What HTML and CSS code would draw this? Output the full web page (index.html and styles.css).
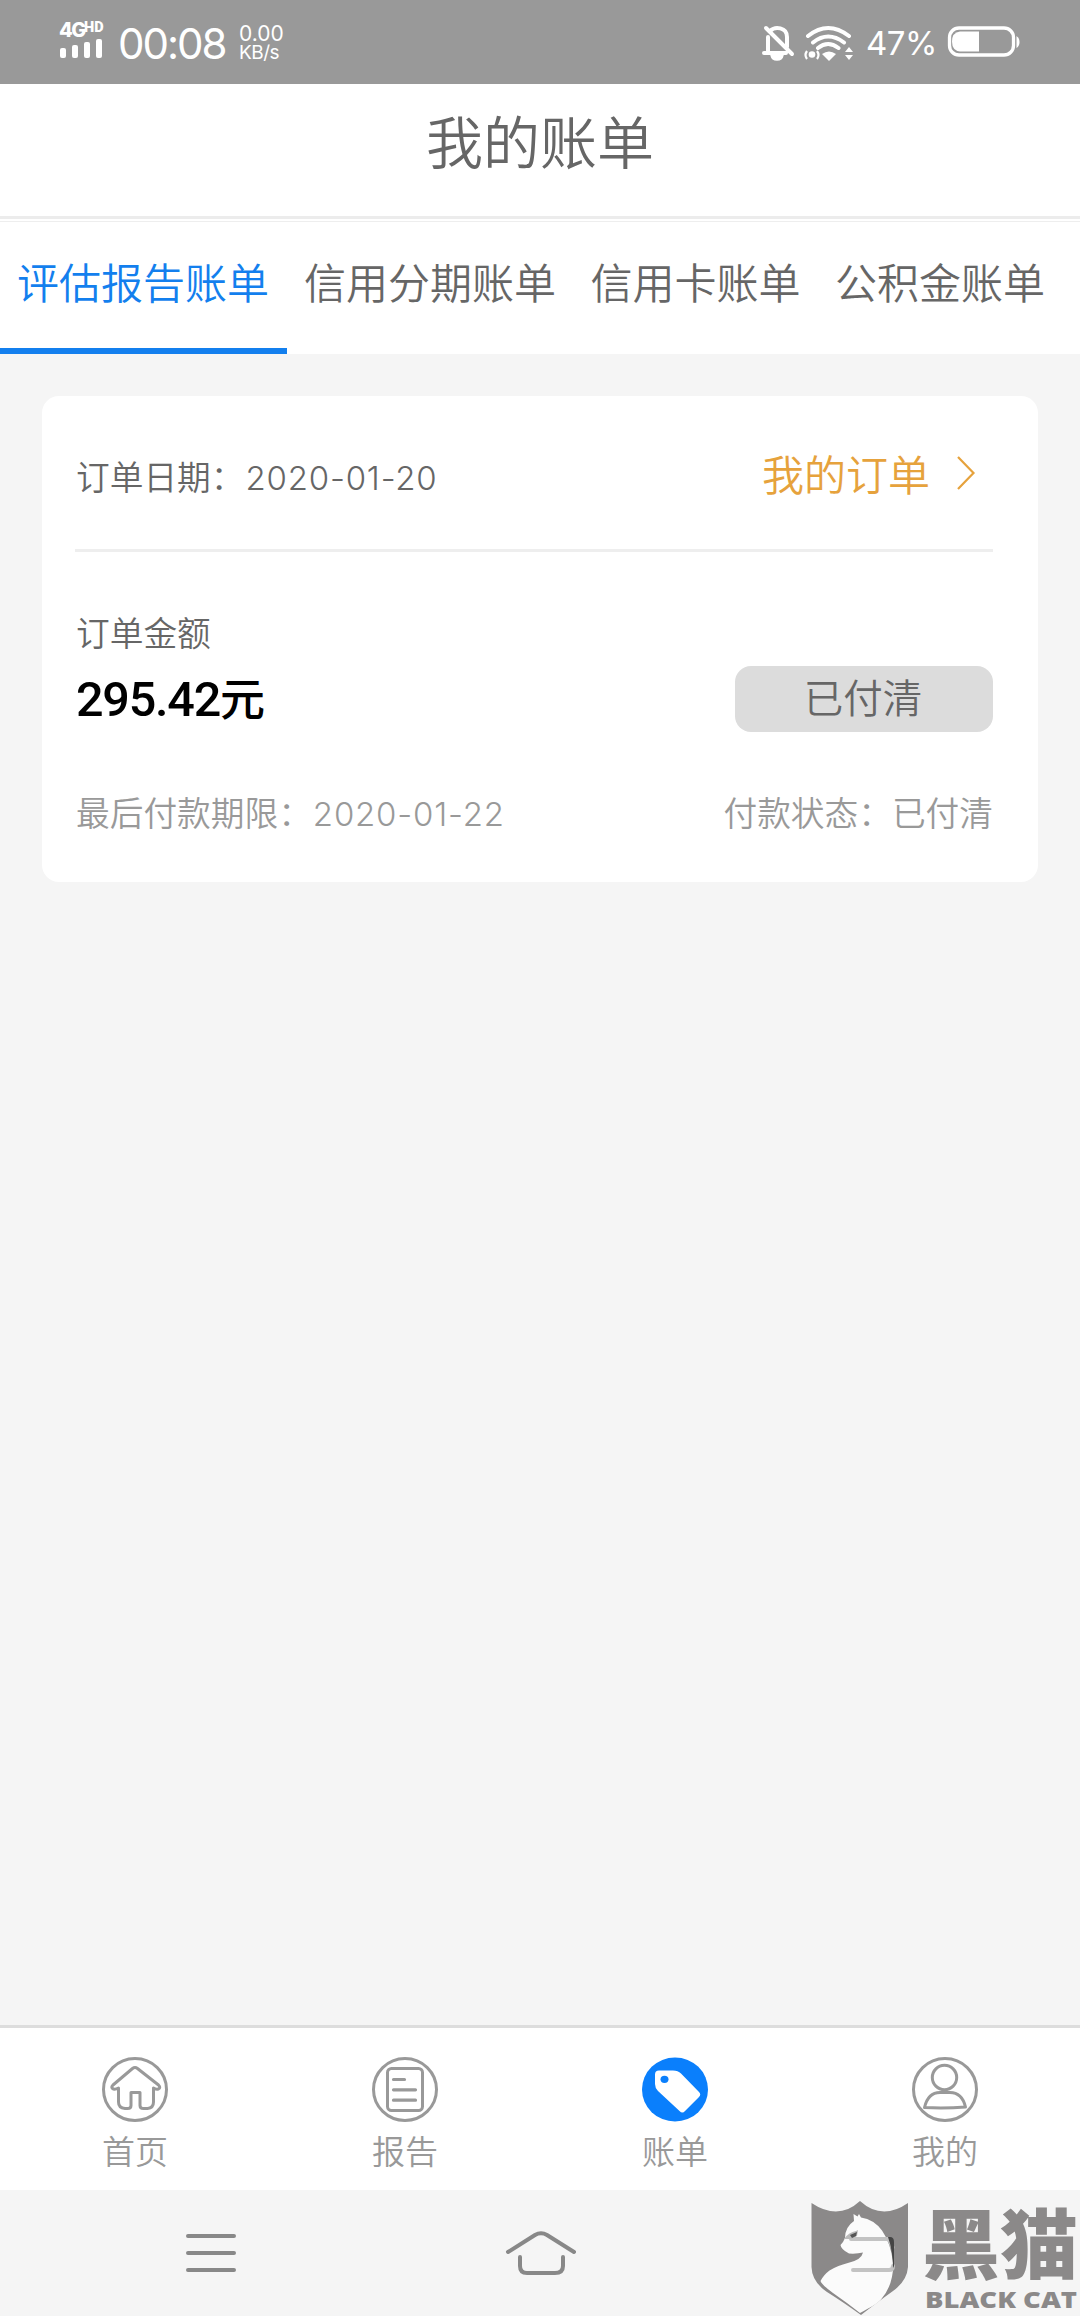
FILE: index.html
```html
<!DOCTYPE html>
<html lang="zh-CN">
<head>
<meta charset="utf-8">
<title>我的账单</title>
<link rel="stylesheet" href="styles.css">
</head>
<body>
<div class="screen">
  <div class="status">
    <div class="signal">
      <div class="net"><span class="net-4g">4G</span><span class="net-hd">HD</span></div>
      <svg class="bars" width="45" height="20" viewBox="0 0 45 20" fill="#fff"><rect x="1" y="9" width="6" height="10" rx="2"/><rect x="13" y="6" width="6" height="13" rx="2"/><rect x="25" y="3" width="6" height="16" rx="2"/><rect x="37" y="0" width="6" height="19" rx="2"/></svg>
    </div>
    <div class="clock">00:08</div>
    <div class="speed"><span>0.00</span><span>KB/s</span></div>
    <svg class="status-icons" width="96" height="40" viewBox="0 0 96 40" fill="none" stroke="#fff">
      <g stroke-width="4" stroke-linecap="round" stroke-linejoin="round">
        <path d="M7 15v15M3 31h22M9 9c5-5 17-4 17 6v10M5 6l26 26"/>
        <path d="M10 33h12q-1 5-6 5t-6-5z" stroke-width="1.500" fill="#fff"/>
        <path d="M47 14q20-16 41 0M52 20.500q15-12 31 0M57 26q10-8 20.500 0"/>
      </g>
      <g fill="#fff" stroke="none"><path d="M61 32q7-5 14 0l-7 7z"/><circle cx="51" cy="32.500" r="3.300"/><path d="M88 25l4 5h-8zM88 38l4-5h-8z"/></g>
      <path d="M46 29q-3 4 0 8M56 29q3 4 0 8" stroke-width="2.200"/>
    </svg>
    <div class="percent">47%</div>
    <svg class="battery" width="74" height="32" viewBox="0 0 74 32"><rect x="2.500" y="2" width="64" height="27" rx="9.500" fill="none" stroke="#fff" stroke-width="3.300"/><path d="M13 5.500h19v20H13q-8-1-8-10t8-10z" fill="#fff"/><path d="M69.500 10q3 2 3 6t-3 6z" fill="#fff"/></svg>
  </div>

  <header class="header"><h1 class="title">我的账单</h1></header>

  <nav class="tabs">
    <a class="tab tab-active">评估报告账单</a>
    <a class="tab">信用分期账单</a>
    <a class="tab">信用卡账单</a>
    <a class="tab">公积金账单</a>
  </nav>

  <main class="content">
    <section class="card">
      <div class="card-head">
        <div class="order-date"><span>订单日期：</span><span class="date">2020-01-20</span></div>
        <a class="order-link">我的订单<svg class="chevron" width="20" height="36" viewBox="0 0 20 36"><path d="M2 2l15.500 16L2 34" fill="none" stroke="#e6a23c" stroke-width="2.200"/></svg></a>
      </div>
      <div class="card-body">
        <div class="amount-row">
          <div>
            <div class="amount-label">订单金额</div>
            <div class="amount"><span class="amount-num">295.42</span>元</div>
          </div>
          <button class="paid">已付清</button>
        </div>
        <div class="foot">
          <div><span>最后付款期限：</span><span class="date">2020-01-22</span></div>
          <div class="state">付款状态：已付清</div>
        </div>
      </div>
    </section>
  </main>

  <nav class="tabbar">
    <a class="tabbar-item">
      <svg width="66" height="66" viewBox="0 0 66 66" fill="none" stroke="#999" stroke-width="3" stroke-linejoin="round"><ellipse cx="33" cy="32.500" rx="31.500" ry="31"/><path d="M30.500 11.500q2.500-2 5 0L56.500 28q2.500 2.500 0 3.800-2 1-5-.8V45q0 6-6 6.500h-4q-3.500 0-3.500-3V35.500h-9V48.500q0 3-3.500 3h-2.500q-6.500-.5-6.500-6.500V31q-4 2-6 .5-1.500-1.500.5-3.500z"/></svg>
      <span>首页</span>
    </a>
    <a class="tabbar-item">
      <svg width="66" height="66" viewBox="0 0 66 66" fill="none" stroke="#999" stroke-width="3"><ellipse cx="33" cy="32.500" rx="31.500" ry="31"/><rect x="15.500" y="11.500" width="35" height="42" rx="4"/><path d="M21.500 22.500h11M21.500 32.800h22M21.500 43.200h22" stroke-linecap="round" stroke-width="3.200"/></svg>
      <span>报告</span>
    </a>
    <a class="tabbar-item">
      <svg width="66" height="66" viewBox="0 0 66 66"><ellipse cx="33" cy="32.500" rx="33" ry="32" fill="#0a7ffc"/><path d="M17 13.500h14q5 0 8 3l18 18.500q2.500 2.500 0 5L43 54q-2.500 3-5.500 0L16 34q-3-3-3-7v-9.500q0-4 4-4z" fill="#fff"/><ellipse cx="22.500" cy="22.300" rx="4" ry="3.600" fill="#0a7ffc"/></svg>
      <span>账单</span>
    </a>
    <a class="tabbar-item">
      <svg width="66" height="66" viewBox="0 0 66 66" fill="none" stroke="#999" stroke-width="3" stroke-linejoin="round"><ellipse cx="33" cy="32.500" rx="31.500" ry="31"/><circle cx="32.500" cy="20.500" r="12.200"/><path d="M12.500 50.500q3.500-15 15.500-15h10q12 0 15.500 14.500-20.500 1.500-41 .5z"/></svg>
      <span>我的</span>
    </a>
  </nav>

  <div class="sysnav">
    <svg width="50" height="44" viewBox="0 0 50 44" stroke="#888" stroke-width="4" stroke-linecap="round"><path d="M2 5h46M2 22h46M2 39h46"/></svg>
    <svg width="72" height="46" viewBox="0 0 72 46" fill="none" stroke="#888" stroke-width="4" stroke-linecap="round" stroke-linejoin="round"><path d="M4 22L31 5q6-3.500 12 0l27 17M16 27v9q0 7 7 7h28q8 0 8-7v-9"/></svg>
    <svg width="50" height="44" viewBox="0 0 50 44"></svg>
  </div>

  <svg class="watermark" width="269" height="118" viewBox="811 2198 269 118">
    <path d="M811.500 2203q27 18 48.500-2 22 20 48 2v64q-1 14-15 24-14 10-32 24-18-13-34-23-15-10-15.500-25z" fill="#8b8989"/>
    <path d="M853.500 2214l4 2.500 1.500-2.500 2 3.500q13 2 21 13 9 13 11 32 1 22-12 37-3 4-21 13.500-14-11-27-20-11-8-12.500-12 3-6 9-10.500 8-5 20-8 12-3 13.500-10-6 1.500-14 1-8-4-8.500-8.500 3-3 4.500-7 0-11 9-17z" fill="#fbfbfb"/>
    <path d="M851 2239h37.500q3 4 4 8.500M853 2270h36q4 0 4-4" fill="none" stroke="#c3c3c3" stroke-width="4" stroke-linecap="round"/>
    <path d="M888 2237h2q4 0 4 5v24l-1 2q0-17-5-31z" fill="#444"/>
    <path d="M844 2239q5-7 12-8l2-1-1 6-6 3z" fill="#bbb"/><path d="M850 2235l7-3-1 4-4 2z" fill="#555"/>
    <text class="wm-cn" x="922" y="2273" textLength="156" lengthAdjust="spacingAndGlyphs">黑猫</text>
    <text class="wm-en" x="925" y="2308" textLength="152" lengthAdjust="spacingAndGlyphs">BLACK CAT</text>
  </svg>
</div>
</body>
</html>
```
FILE: styles.css
```css
* { box-sizing: border-box; }
body {
  margin: 0;
  background: #f5f5f5;
  color: #666;
  font-family: "Noto Sans CJK SC DemiLight", "Noto Sans CJK SC", sans-serif;
  font-weight: 350;
}
.screen {
  position: relative;
  display: flex;
  flex-direction: column;
  width: 1080px;
  height: 2316px;
  overflow: hidden;
}

.status {
  display: flex;
  align-items: center;
  height: 84px;
  padding: 0 59px;
  background: #999;
  color: #fff;
  font-family: Inter, sans-serif;
  font-weight: 400;
}
.signal { width: 59px; height: 40px; }
.net { display: flex; height: 17px; line-height: 17px; font-weight: 800; }
.net-4g { width: 25px; font-size: 20px; letter-spacing: -1.5px; }
.net-hd { font-size: 14.5px; line-height: 11px; font-family: Roboto, sans-serif; font-weight: 900; }
.bars { display: block; }
.clock { width: 121px; font-size: 42px; line-height: 50px; padding-top: 4px; letter-spacing: -2px; }
.speed { display: flex; flex-direction: column; padding-top: 2px; font-size: 21px; line-height: 19px; }
.speed span:last-child { font-size: 19px; letter-spacing: -.5px; }
.status-icons { margin-left: auto; }
.percent { width: 90px; padding: 2px 0 0 9px; font-size: 33px; line-height: 40px; letter-spacing: -.5px; }
.battery { display: block; }

.header {
  height: 138px;
  padding-top: 22px;
  background: #fff;
  border-bottom: 1px solid #eee;
}
.title {
  height: 113px;
  margin: 0;
  border-bottom: 3px solid #ececec;
  font-size: 57px;
  font-weight: 350;
  line-height: 66px;
  text-align: center;
}

.tabs { display: flex; height: 132px; background: #fff; }
.tab { padding: 0 17.5px 0 17px; font-size: 42px; line-height: 117px; white-space: nowrap; }
.tab-active { padding-right: 18px; color: #137fee; border-bottom: 6px solid #137fee; }

.content { flex: 1; padding: 42px; }
.card {
  height: 486px;
  padding: 0 45px 0 33px;
  border-radius: 17px;
  background: #fff;
  font-size: 33.7px;
}
.card-head {
  display: flex;
  justify-content: space-between;
  height: 156px;
  border-bottom: 3px solid #eee;
}
.order-date { padding-left: 1px; line-height: 160px; }
.date { margin-left: 1px; font-family: Inter, sans-serif; font-size: 33px; font-weight: 300; letter-spacing: .8px; }
.order-link {
  display: flex;
  align-items: center;
  gap: 26px;
  height: 153px;
  padding-right: 17px;
  color: #e6a23c;
  font-size: 42px;
}
.amount-row { display: flex; justify-content: space-between; height: 192px; padding: 56px 0 0 1px; }
.amount-label { line-height: 48px; }
.amount {
  color: #000;
  font-family: "Noto Sans CJK SC", sans-serif;
  font-size: 45px;
  font-weight: 500;
  line-height: 82px;
}
.amount-num { font-family: Roboto, sans-serif; font-size: 48.5px; letter-spacing: -1.2px; }
.paid {
  width: 258px;
  height: 66px;
  margin-top: 58px;
  padding: 0 2px 7px 0;
  border: 0;
  border-radius: 16px;
  background: #dcdcdc;
  color: #666;
  font: inherit;
  font-size: 39.5px;
  line-height: 59px;
}
.foot { display: flex; justify-content: space-between; padding-left: 1px; color: #999; line-height: 136px; }

.tabbar {
  display: flex;
  height: 165px;
  padding-top: 29px;
  border-top: 3px solid #ddd;
  background: #fff;
}
.tabbar-item {
  flex: 1;
  display: flex;
  flex-direction: column;
  align-items: center;
  color: #999;
  font-size: 33px;
  line-height: 54px;
}

.sysnav {
  display: flex;
  justify-content: space-between;
  align-items: center;
  height: 126px;
  padding: 0 186px;
}
.watermark { position: absolute; left: 811px; top: 2198px; overflow: visible; }
.wm-cn { font: 900 76px "Noto Sans CJK SC", sans-serif; fill: #8b8989; }
.wm-en { font: 800 23px "Open Sans", sans-serif; fill: #8b8989; }
```
